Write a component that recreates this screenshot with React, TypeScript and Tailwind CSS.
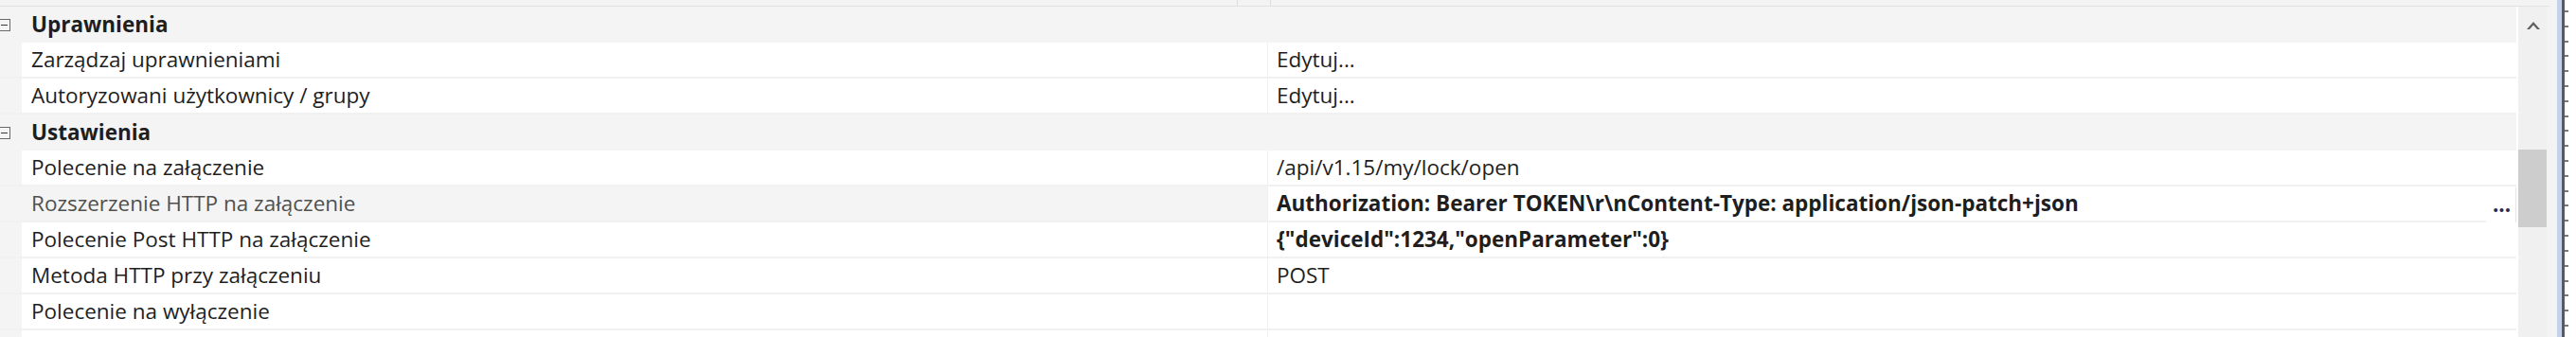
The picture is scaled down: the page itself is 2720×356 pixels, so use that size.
import React from "react";

type Row =
  | { kind: "group"; label: string }
  | { kind: "prop"; label: string; value?: string; bold?: boolean; selected?: boolean; button?: boolean };

const rows: Row[] = [
  { kind: "group", label: "Uprawnienia" },
  { kind: "prop", label: "Zarządzaj uprawnieniami", value: "Edytuj..." },
  { kind: "prop", label: "Autoryzowani użytkownicy / grupy", value: "Edytuj..." },
  { kind: "group", label: "Ustawienia" },
  { kind: "prop", label: "Polecenie na załączenie", value: "/api/v1.15/my/lock/open" },
  {
    kind: "prop",
    label: "Rozszerzenie HTTP na załączenie",
    value: "Authorization: Bearer TOKEN\\r\\nContent-Type: application/json-patch+json",
    bold: true,
    selected: true,
    button: true,
  },
  { kind: "prop", label: "Polecenie Post HTTP na załączenie", value: '{"deviceId":1234,"openParameter":0}', bold: true },
  { kind: "prop", label: "Metoda HTTP przy załączeniu", value: "POST" },
  { kind: "prop", label: "Polecenie na wyłączenie", value: "" },
  { kind: "prop", label: "", value: "" },
];

function Collapse() {
  return (
    <svg width="13" height="13" viewBox="0 0 13 13" className="ml-[-2px]">
      <rect x="0.5" y="0.5" width="12" height="12" fill="none" stroke="#6a6a6a" />
      <line x1="3" y1="6.5" x2="10" y2="6.5" stroke="#3a3a3a" />
    </svg>
  );
}

function GroupRow({ label }: { label: string }) {
  return (
    <div className="flex h-[38px] shrink-0 items-center bg-[#f4f4f4]">
      <div className="flex w-[33px] items-center">
        <Collapse />
      </div>
      <span className="font-bold text-[#1e1e1e]">{label}</span>
    </div>
  );
}

function PropRow({ row }: { row: Extract<Row, { kind: "prop" }> }) {
  return (
    <div className="flex h-[38px] shrink-0 border-b-2 border-[#f1f1f1] bg-[#f4f4f4]">
      <div className="w-[23px]" />
      <div
        className={`flex w-[1315px] items-center pl-[10px] ${
          row.selected ? "bg-[#f4f4f4] text-[#505050]" : "bg-white text-[#1e1e1e]"
        }`}
      >
        {row.label}
      </div>
      <div className="w-px bg-[#f1f1f1]" />
      <div className="relative flex flex-1 items-center bg-white pl-[9px] text-[#1e1e1e]">
        <span className={row.bold ? "font-bold" : ""}>{row.value}</span>
        {row.button && (
          <div className="absolute right-px top-0 flex h-[38px] w-[31px] items-center justify-center bg-white pl-[2px] font-bold shadow-[1px_1px_0_#e6e6e6] text-[#2a2a4a]">
            ...
          </div>
        )}
      </div>
    </div>
  );
}

function Scrollbar() {
  return (
    <div className="flex w-[30px] flex-col bg-[#f0f0f0]">
      <div className="flex h-[38px] items-center justify-center pl-[2px]">
        <svg width="16" height="12" viewBox="0 0 16 12">
          <path d="M1 11 L8 3 L15 11 L12 11 L8 6.5 L4 11 Z" fill="#606060" />
        </svg>
      </div>
      <div className="h-[113px]" />
      <div className="h-[82px] bg-[#cdcdcd]" />
    </div>
  );
}

export default function App() {
  return (
    <div className="flex h-[356px] w-[2720px] overflow-hidden bg-white font-['Open_Sans',sans-serif] text-[22.5px]">
      <div className="flex w-[2692px] flex-col">
        <div className="relative h-[7px] shrink-0 border-b border-[#e2e2e2] bg-[#f3f3f3]">
          <div className="absolute left-[1306px] top-0 h-[6px] w-px bg-[#dcdcdc]" />
          <div className="absolute left-[1341px] top-0 h-[6px] w-px bg-[#dcdcdc]" />
        </div>
        <div className="flex flex-1">
          <div className="flex w-[2657px] flex-col">
            {rows.map((r, i) =>
              r.kind === "group" ? <GroupRow key={i} label={r.label} /> : <PropRow key={i} row={r} />
            )}
          </div>
          <div className="w-[2px] bg-white" />
          <Scrollbar />
          <div className="w-[3px] bg-[#f3f3f3]" />
        </div>
      </div>
      <div className="w-[8px] bg-[#f3f3f3]" />
      <div className="w-[5px] bg-[#c5d1ea]" />
      <div className="w-[3px] bg-[#5a5a5a]" />
      <div className="flex w-[12px] flex-col justify-around bg-white py-[4px]">
        {Array.from({ length: 22 }).map((_, i) => (
          <div key={i} className="h-[2px] w-[4px] bg-[#7a7a7a]" />
        ))}
      </div>
    </div>
  );
}
